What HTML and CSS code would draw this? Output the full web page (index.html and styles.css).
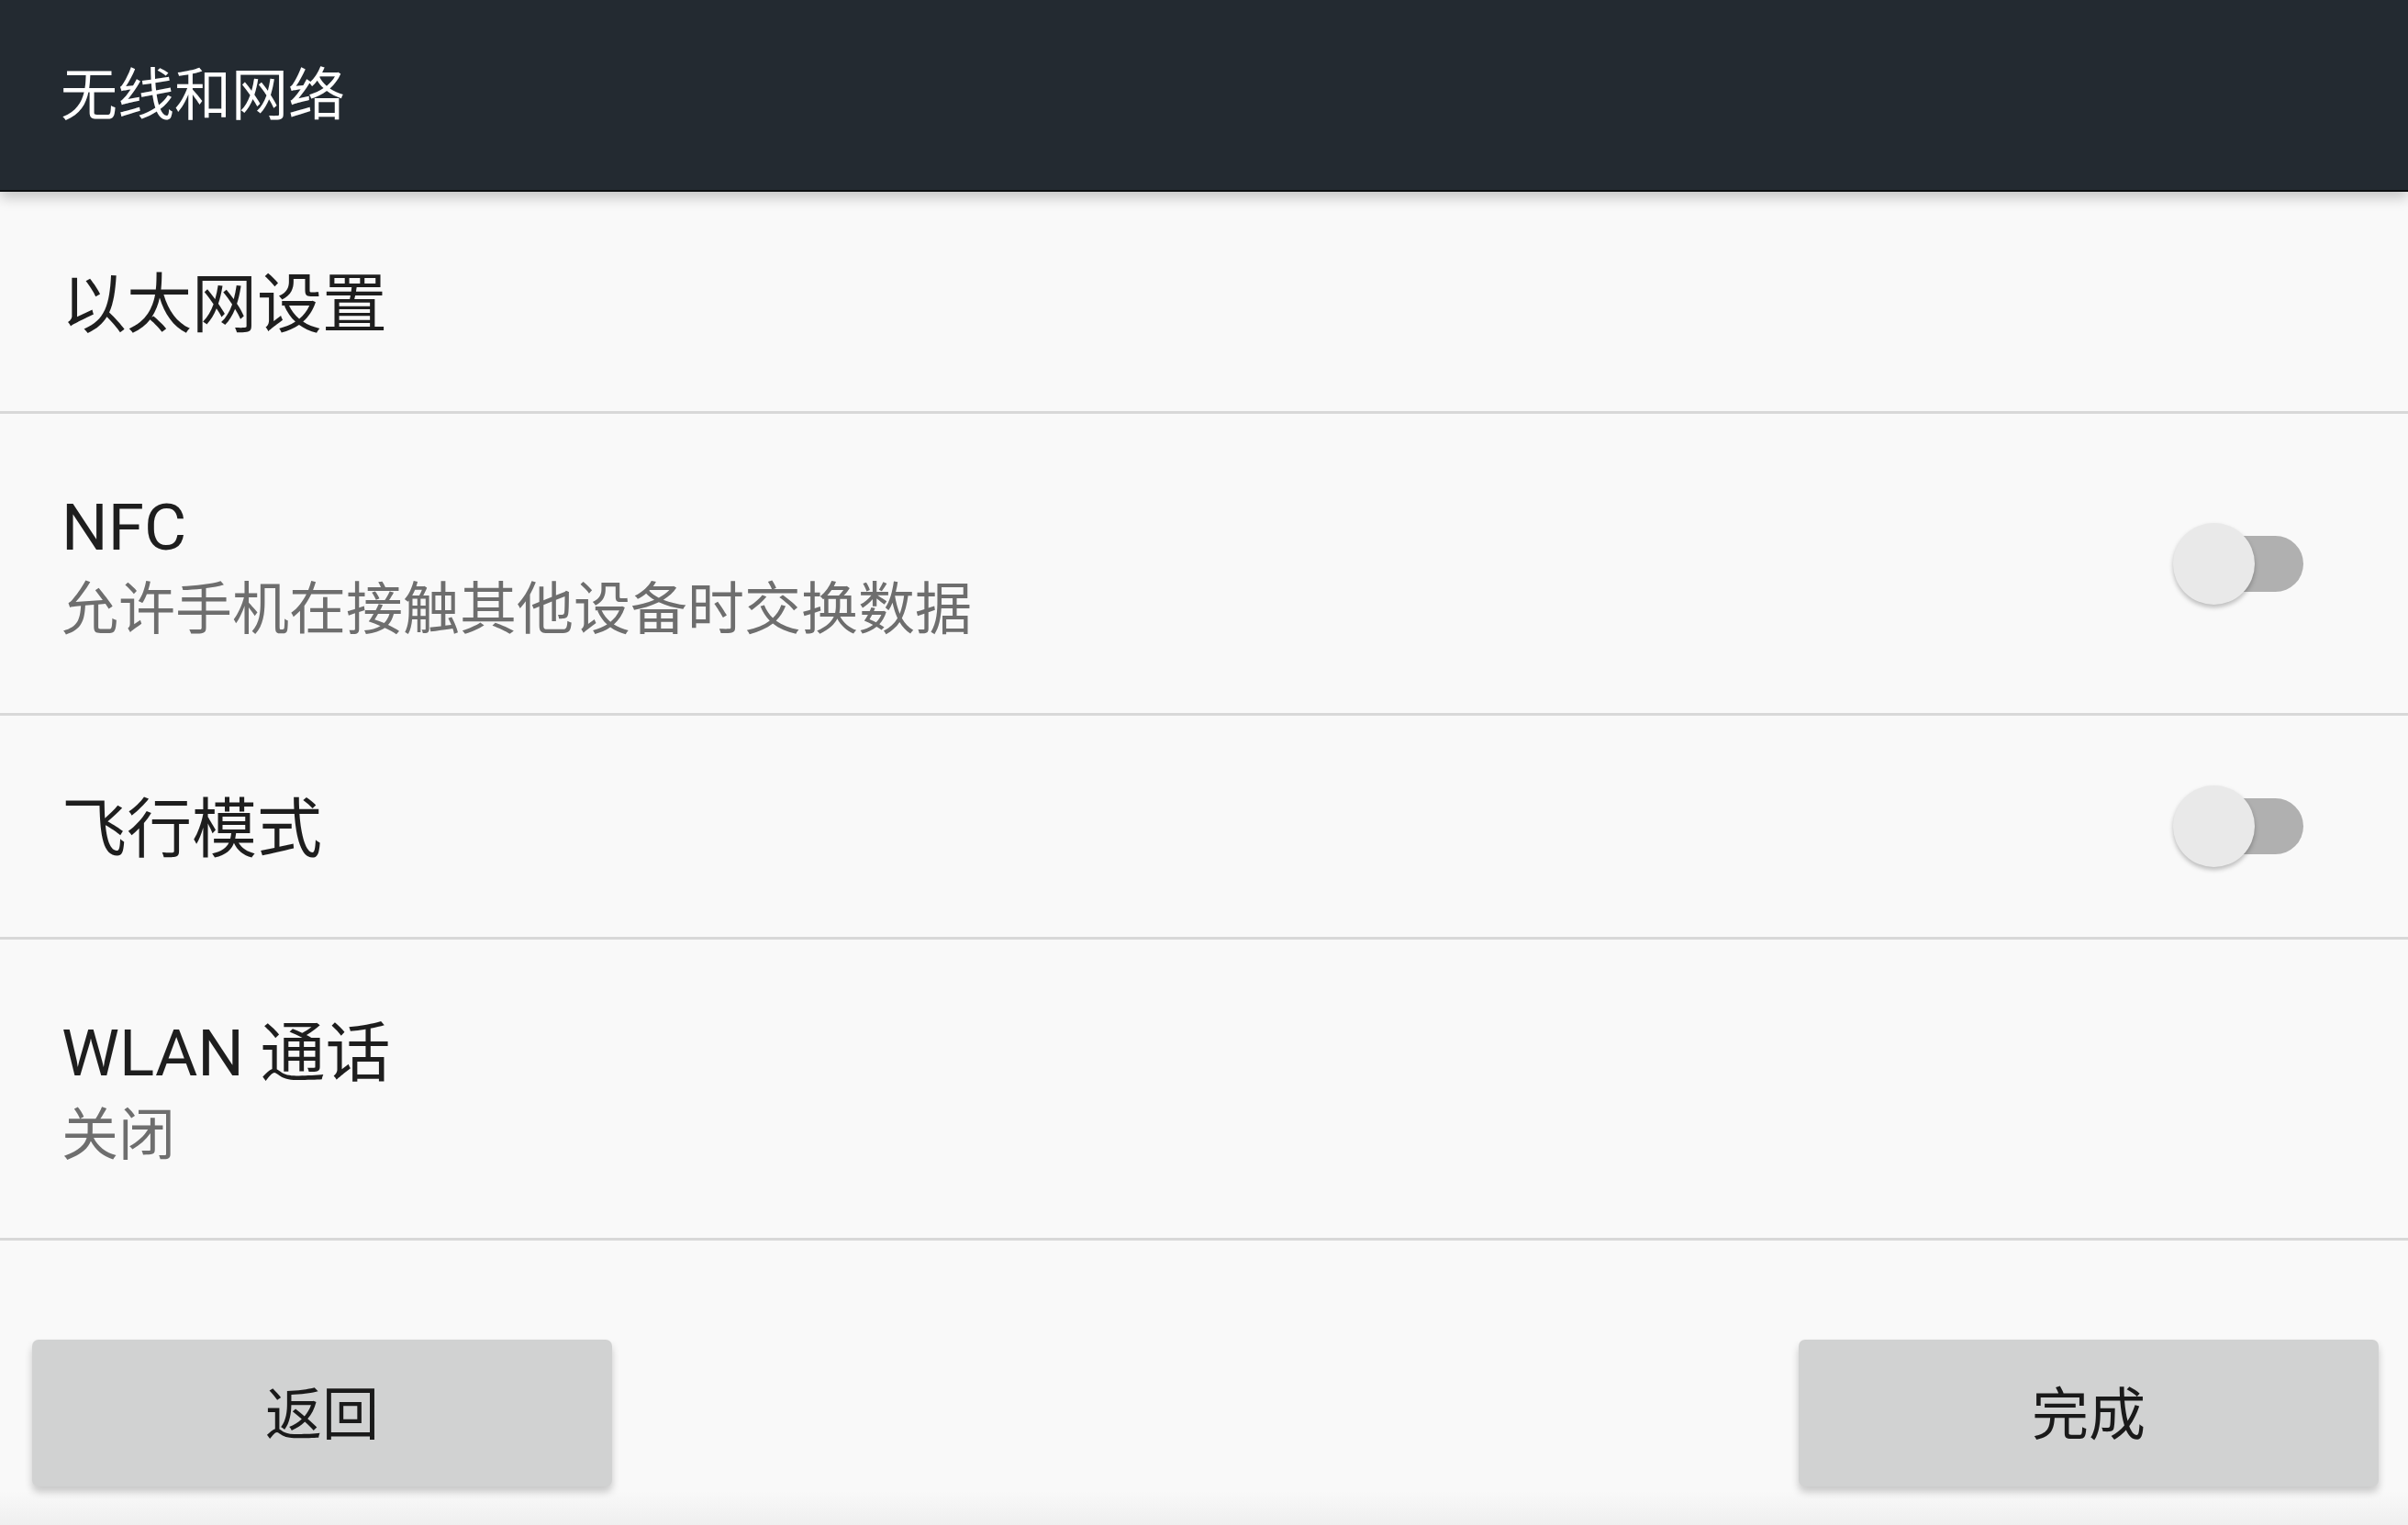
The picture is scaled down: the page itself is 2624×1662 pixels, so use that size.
FILE: index.html
```html
<!DOCTYPE html>
<html lang="zh-CN">
<head>
<meta charset="utf-8">
<title>无线和网络</title>
<link rel="stylesheet" href="styles.css">
</head>
<body>
<div class="screen">
  <header class="appbar">
    <h1 class="appbar-title">无线和网络</h1>
  </header>
  <main class="list">
    <div class="row row-ethernet">
      <div class="row-text">
        <div class="row-title">以太网设置</div>
      </div>
    </div>
    <div class="divider"></div>
    <div class="row row-nfc">
      <div class="row-text two-line">
        <div class="row-title">NFC</div>
        <div class="row-sub">允许手机在接触其他设备时交换数据</div>
      </div>
      <div class="switch"><span class="track"></span><span class="thumb"></span></div>
    </div>
    <div class="divider"></div>
    <div class="row row-plane">
      <div class="row-text">
        <div class="row-title">飞行模式</div>
      </div>
      <div class="switch"><span class="track"></span><span class="thumb"></span></div>
    </div>
    <div class="divider"></div>
    <div class="row row-wlan">
      <div class="row-text two-line">
        <div class="row-title">WLAN 通话</div>
        <div class="row-sub">关闭</div>
      </div>
    </div>
    <div class="divider"></div>
  </main>
  <footer class="actions">
    <button class="btn">返回</button>
    <button class="btn">完成</button>
  </footer>
</div>
</body>
</html>
```
FILE: styles.css
```css
* { box-sizing: border-box; }
html, body {
  margin: 0;
  padding: 0;
  width: 2624px;
  height: 1662px;
  overflow: hidden;
  background: #f9f9f9;
  font-family: "Roboto", "Noto Sans CJK SC", sans-serif;
}
.screen {
  position: relative;
  width: 2624px;
  height: 1662px;
  display: flex;
  flex-direction: column;
  background: linear-gradient(to bottom, #f9f9f9 0, #f9f9f9 1625px, #efefef 1662px);
}
.appbar {
  height: 209px;
  background: #232a31;
  border-bottom: 2px solid #0d0f11;
  box-shadow: 0 6px 14px rgba(0, 0, 0, 0.22);
  display: flex;
  align-items: center;
  padding-left: 66px;
  position: relative;
  z-index: 2;
  flex-shrink: 0;
}
.appbar-title {
  margin: 0;
  font-weight: 400;
  font-size: 62px;
  color: #ffffff;
  line-height: 1;
  padding-top: 2px;
}
.list {
  display: flex;
  flex-direction: column;
}
.row {
  display: flex;
  align-items: center;
  padding-left: 67px;
  padding-right: 114px;
}
.row-ethernet { height: 239px; }
.row-nfc { height: 326px; }
.row-plane { height: 241px; }
.row-wlan { height: 325px; }
.divider {
  height: 3px;
  background: #d8d8d8;
}
.row-text {
  flex: 1;
  display: flex;
  flex-direction: column;
  padding-top: 6px;
}
.row-text.two-line {
  padding-top: 11px;
}
.row-title {
  font-size: 71px;
  color: #1e1e1e;
  line-height: 86px;
}
.row-sub {
  font-size: 62px;
  color: #6e6e6e;
  line-height: 84px;
  margin-top: 5px;
}
.switch {
  position: relative;
  width: 142px;
  height: 89px;
  flex-shrink: 0;
}
.track {
  position: absolute;
  left: 12px;
  top: 14px;
  width: 130px;
  height: 61px;
  border-radius: 31px;
  background: #b0b0b0;
}
.thumb {
  position: absolute;
  left: 0;
  top: 0;
  width: 89px;
  height: 89px;
  border-radius: 50%;
  background: #e9e9e9;
  box-shadow: 0 3px 5px rgba(0, 0, 0, 0.25);
}
.actions {
  display: flex;
  justify-content: space-between;
  padding: 0 32px 0 35px;
  margin-top: 108px;
}
.btn {
  width: 632px;
  height: 160px;
  border: none;
  border-radius: 7px;
  background: #d1d2d2;
  box-shadow: 0 6px 8px rgba(0, 0, 0, 0.2);
  font-family: "Roboto", "Noto Sans CJK SC", sans-serif;
  font-size: 62px;
  color: #1a1a1a;
  padding: 5px 0 0 0;
  line-height: 1;
}
```
